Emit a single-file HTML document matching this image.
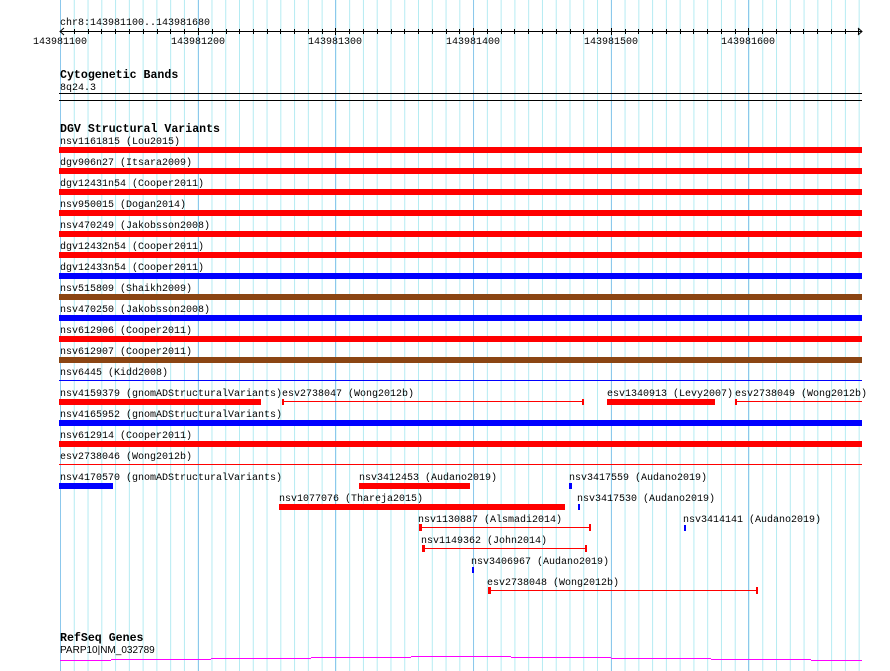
<!DOCTYPE html>
<html><head><meta charset="utf-8"><style>
html,body{margin:0;padding:0;background:#fff;width:890px;height:671px;overflow:hidden}
svg{display:block}
text{font-family:"Liberation Mono",monospace;font-size:10px;fill:#000}
.b{font-weight:bold;font-size:11.6px}
</style></head><body>
<svg width="890" height="671" viewBox="0 0 890 671" xmlns="http://www.w3.org/2000/svg" shape-rendering="crispEdges">
<defs>
<pattern id="g" x="60" y="0" width="13.77" height="671" patternUnits="userSpaceOnUse">
<rect x="0" y="0" width="1" height="671" fill="#b4ebf2"/>
</pattern>
</defs>
<rect x="60" y="0" width="800" height="671" fill="url(#g)"/>
<g fill="#8cc8ec">
<rect x="60" y="0" width="1" height="671"/><rect x="198" y="0" width="1" height="671"/><rect x="335" y="0" width="1" height="671"/><rect x="473" y="0" width="1" height="671"/><rect x="611" y="0" width="1" height="671"/><rect x="748" y="0" width="1" height="671"/>
</g>

<!-- ruler -->
<text x="60" y="25">chr8:143981100..143981680</text>
<rect x="60" y="31" width="802" height="1" fill="#000"/>
<path d="M64 28 L60 31.5 L64 35 M858 28 L862 31.5 L858 35" stroke="#000" fill="none" shape-rendering="auto"/>
<g fill="#000">
<rect x="74" y="29" width="1" height="5"/><rect x="88" y="29" width="1" height="5"/><rect x="101" y="29" width="1" height="5"/><rect x="115" y="29" width="1" height="5"/><rect x="129" y="29" width="1" height="5"/><rect x="143" y="29" width="1" height="5"/><rect x="157" y="29" width="1" height="5"/><rect x="170" y="29" width="1" height="5"/><rect x="184" y="29" width="1" height="5"/><rect x="198" y="28" width="1" height="7"/>
<rect x="212" y="29" width="1" height="5"/><rect x="226" y="29" width="1" height="5"/><rect x="239" y="29" width="1" height="5"/><rect x="253" y="29" width="1" height="5"/><rect x="267" y="29" width="1" height="5"/><rect x="280" y="29" width="1" height="5"/><rect x="294" y="29" width="1" height="5"/><rect x="308" y="29" width="1" height="5"/><rect x="322" y="29" width="1" height="5"/><rect x="335" y="28" width="1" height="7"/>
<rect x="349" y="29" width="1" height="5"/><rect x="363" y="29" width="1" height="5"/><rect x="377" y="29" width="1" height="5"/><rect x="391" y="29" width="1" height="5"/><rect x="404" y="29" width="1" height="5"/><rect x="418" y="29" width="1" height="5"/><rect x="432" y="29" width="1" height="5"/><rect x="446" y="29" width="1" height="5"/><rect x="459" y="29" width="1" height="5"/><rect x="473" y="28" width="1" height="7"/>
<rect x="487" y="29" width="1" height="5"/><rect x="501" y="29" width="1" height="5"/><rect x="514" y="29" width="1" height="5"/><rect x="528" y="29" width="1" height="5"/><rect x="542" y="29" width="1" height="5"/><rect x="556" y="29" width="1" height="5"/><rect x="570" y="29" width="1" height="5"/><rect x="583" y="29" width="1" height="5"/><rect x="597" y="29" width="1" height="5"/><rect x="611" y="28" width="1" height="7"/>
<rect x="625" y="29" width="1" height="5"/><rect x="638" y="29" width="1" height="5"/><rect x="652" y="29" width="1" height="5"/><rect x="666" y="29" width="1" height="5"/><rect x="680" y="29" width="1" height="5"/><rect x="693" y="29" width="1" height="5"/><rect x="707" y="29" width="1" height="5"/><rect x="721" y="29" width="1" height="5"/><rect x="735" y="29" width="1" height="5"/><rect x="748" y="28" width="1" height="7"/>
<rect x="762" y="29" width="1" height="5"/><rect x="776" y="29" width="1" height="5"/><rect x="790" y="29" width="1" height="5"/><rect x="803" y="29" width="1" height="5"/><rect x="817" y="29" width="1" height="5"/><rect x="831" y="29" width="1" height="5"/><rect x="845" y="29" width="1" height="5"/><rect x="858" y="29" width="1" height="5"/>
</g>
<g text-anchor="middle">
<text x="60" y="44">143981100</text><text x="198" y="44">143981200</text><text x="335" y="44">143981300</text><text x="473" y="44">143981400</text><text x="611" y="44">143981500</text><text x="748" y="44">143981600</text>
</g>

<!-- cytobands -->
<text class="b" x="60" y="78">Cytogenetic Bands</text>
<text x="60" y="90">8q24.3</text>
<rect x="59" y="93" width="803" height="1" fill="#000"/>
<rect x="59" y="100" width="803" height="1" fill="#000"/>

<!-- DGV -->
<text class="b" x="60" y="132">DGV Structural Variants</text>
<text x="60" y="144">nsv1161815 (Lou2015)</text>
<text x="60" y="165">dgv906n27 (Itsara2009)</text>
<text x="60" y="186">dgv12431n54 (Cooper2011)</text>
<text x="60" y="207">nsv950015 (Dogan2014)</text>
<text x="60" y="228">nsv470249 (Jakobsson2008)</text>
<text x="60" y="249">dgv12432n54 (Cooper2011)</text>
<text x="60" y="270">dgv12433n54 (Cooper2011)</text>
<text x="60" y="291">nsv515809 (Shaikh2009)</text>
<text x="60" y="312">nsv470250 (Jakobsson2008)</text>
<text x="60" y="333">nsv612906 (Cooper2011)</text>
<text x="60" y="354">nsv612907 (Cooper2011)</text>
<text x="60" y="375">nsv6445 (Kidd2008)</text>
<text x="60" y="396">nsv4159379 (gnomADStructuralVariants)</text>
<text x="282" y="396">esv2738047 (Wong2012b)</text>
<text x="607" y="396">esv1340913 (Levy2007)</text>
<text x="735" y="396">esv2738049 (Wong2012b)</text>
<text x="60" y="417">nsv4165952 (gnomADStructuralVariants)</text>
<text x="60" y="438">nsv612914 (Cooper2011)</text>
<text x="60" y="459">esv2738046 (Wong2012b)</text>
<text x="60" y="480">nsv4170570 (gnomADStructuralVariants)</text>
<text x="359" y="480">nsv3412453 (Audano2019)</text>
<text x="569" y="480">nsv3417559 (Audano2019)</text>
<text x="279" y="501">nsv1077076 (Thareja2015)</text>
<text x="577" y="501">nsv3417530 (Audano2019)</text>
<text x="418" y="522">nsv1130887 (Alsmadi2014)</text>
<text x="683" y="522">nsv3414141 (Audano2019)</text>
<text x="421" y="543">nsv1149362 (John2014)</text>
<text x="471" y="564">nsv3406967 (Audano2019)</text>
<text x="487" y="585">esv2738048 (Wong2012b)</text>

<g>
<rect x="59" y="147" width="803" height="6" fill="#f00"/>
<rect x="59" y="168" width="803" height="6" fill="#f00"/>
<rect x="59" y="189" width="803" height="6" fill="#f00"/>
<rect x="59" y="210" width="803" height="6" fill="#f00"/>
<rect x="59" y="231" width="803" height="6" fill="#f00"/>
<rect x="59" y="252" width="803" height="6" fill="#f00"/>
<rect x="59" y="273" width="803" height="6" fill="#00f"/>
<rect x="59" y="294" width="803" height="6" fill="#8b4513"/>
<rect x="59" y="315" width="803" height="6" fill="#00f"/>
<rect x="59" y="336" width="803" height="6" fill="#f00"/>
<rect x="59" y="357" width="803" height="6" fill="#8b4513"/>
<rect x="59" y="380" width="803" height="1" fill="#00f"/>
<!-- row 12 -->
<rect x="59" y="399" width="202" height="6" fill="#f00"/>
<rect x="282" y="401" width="301" height="1" fill="#f00"/>
<rect x="282" y="399" width="2" height="6" fill="#f00"/><rect x="582" y="399" width="2" height="6" fill="#f00"/>
<rect x="607" y="399" width="108" height="6" fill="#f00"/>
<rect x="735" y="401" width="127" height="1" fill="#f00"/>
<rect x="735" y="399" width="2" height="6" fill="#f00"/>
<rect x="59" y="420" width="803" height="6" fill="#00f"/>
<rect x="59" y="441" width="803" height="6" fill="#f00"/>
<rect x="59" y="464" width="803" height="1" fill="#f00"/>
<!-- row 16 -->
<rect x="59" y="483" width="54" height="6" fill="#00f"/>
<rect x="359" y="483" width="111" height="6" fill="#f00"/>
<rect x="569" y="483" width="3" height="6" fill="#00f"/>
<rect x="279" y="504" width="286" height="6" fill="#f00"/>
<rect x="578" y="504" width="2" height="6" fill="#00f"/>
<rect x="419" y="527" width="172" height="1" fill="#f00"/>
<rect x="419" y="524" width="3" height="7" fill="#f00"/><rect x="589" y="524" width="2" height="7" fill="#f00"/>
<rect x="684" y="525" width="2" height="6" fill="#00f"/>
<rect x="422" y="548" width="164" height="1" fill="#f00"/>
<rect x="422" y="545" width="3" height="7" fill="#f00"/><rect x="585" y="545" width="2" height="7" fill="#f00"/>
<rect x="472" y="567" width="2" height="6" fill="#00f"/>
<rect x="488" y="590" width="270" height="1" fill="#f00"/>
<rect x="488" y="587" width="3" height="7" fill="#f00"/><rect x="756" y="587" width="2" height="7" fill="#f00"/>
</g>

<!-- RefSeq -->
<text class="b" x="60" y="641">RefSeq Genes</text>
<text x="60" y="653" style="font-family:'Liberation Sans',sans-serif;font-size:10px">PARP10|NM_032789</text>
<g fill="#f0f">
<rect x="60" y="660" width="51" height="1"/>
<rect x="111" y="659" width="100" height="1"/>
<rect x="211" y="658" width="100" height="1"/>
<rect x="311" y="657" width="100" height="1"/>
<rect x="411" y="656" width="100" height="1"/>
<rect x="511" y="657" width="100" height="1"/>
<rect x="611" y="658" width="100" height="1"/>
<rect x="711" y="659" width="100" height="1"/>
<rect x="811" y="660" width="51" height="1"/>
</g>
</svg>
</body></html>
